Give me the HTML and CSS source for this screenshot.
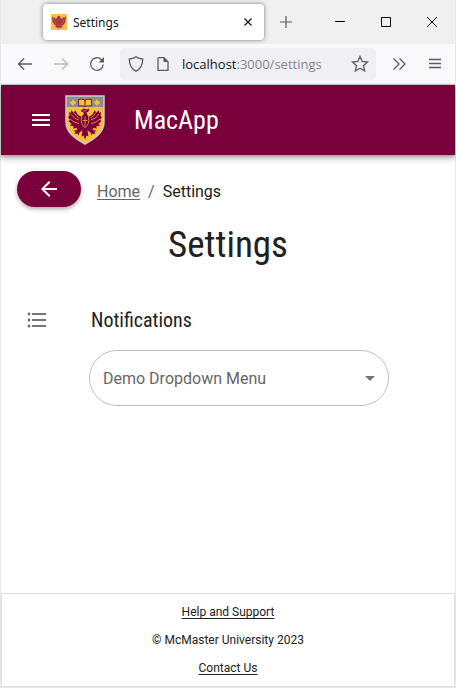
FILE: index.html
```html
<!DOCTYPE html>
<html lang="en">
<head>
<meta charset="utf-8">
<meta name="viewport" content="width=device-width, initial-scale=1">
<title>Settings</title>
<link rel="stylesheet" href="styles.css">
</head>
<body>
<div class="window">
  <header class="chrome">
    <div class="tabstrip">
      <div class="tab">
        <svg class="favicon" viewBox="0 0 16 16" aria-hidden="true">
          <path fill="#ffbd4a" d="M0 0h16v16H0z"/>
          <path fill="#a33c42" d="M1 2l.5 6 2 3 2 .5-2 2 2-.5.5 1.500 1.500-1L8 15l.5-1.500 1.500 1 .5-1.500 2 .5-2-2 2-.5 2-3 .5-6-2 2-1-1-1 2-1.500-1V3L8 1.500 6 3v1L4.500 5l-1-2-1 1z"/>
          <path stroke="#d77a43" stroke-width=".5" fill="none" d="M3 6l2 4M13 6l-2 4M7 11h2"/>
        </svg>
        <span class="tab-title">Settings</span>
        <button class="plain tab-close" aria-label="Close tab"><svg width="10" height="10" viewBox="0 0 10 10"><path d="M1.500 1.500l7 7m0-7l-7 7" stroke="#15141a" stroke-width="1.200"/></svg></button>
      </div>
      <button class="plain new-tab" aria-label="New tab"><svg width="14" height="14" viewBox="0 0 14 14"><path d="M7 1v12M1 7h12" stroke="#5b5b66" stroke-width="1.200"/></svg></button>
      <div class="window-controls">
        <button class="plain" aria-label="Minimize"><svg width="12" height="12" viewBox="0 0 12 12"><path d="M1 5.500h10" stroke="#000"/></svg></button>
        <button class="plain" aria-label="Maximize"><svg width="12" height="12" viewBox="0 0 12 12"><path d="M1.500 1.500h9v9h-9z" stroke="#000" fill="none"/></svg></button>
        <button class="plain" aria-label="Close"><svg width="12" height="12" viewBox="0 0 12 12"><path d="M1 1l10 10M11 1L1 11" stroke="#000"/></svg></button>
      </div>
    </div>
    <div class="toolbar">
      <button class="plain" aria-label="Back"><svg width="16" height="16" viewBox="0 0 16 16"><path d="M15 8H1.500M7 2.500L1.500 8 7 13.500" class="line"/></svg></button>
      <button class="plain faded" aria-label="Forward"><svg width="16" height="16" viewBox="0 0 16 16"><path d="M1 8h13.500M9 2.500L14.500 8 9 13.500" class="line"/></svg></button>
      <button class="plain" aria-label="Reload"><svg width="16" height="16" viewBox="0 0 16 16"><path d="M14.200 8.500a6.300 6.300 0 1 1-1.700-4.800L14 5.300" class="line"/><path d="M15 1v5.500H9.500z" fill="#5b5b66"/></svg></button>
      <div class="address">
        <svg width="16" height="16" viewBox="0 0 16 16" aria-hidden="true"><path d="M8 .8C6 2.300 4 2.900 1.300 3c0 5.500 1.200 9.500 6.700 12.200C13.500 12.500 14.700 8.500 14.700 3 12 2.900 10 2.300 8 .8z" class="line"/></svg>
        <svg width="12" height="16" viewBox="0 0 12 16" aria-hidden="true"><path d="M2 1.700h5L11 5.700v8.600H1V2.700a1 1 0 0 1 1-1z" class="line"/><path d="M6.500 1.500V6H11z" fill="#5b5b66"/></svg>
        <span class="url"><span class="host">localhost</span>:3000/settings</span>
        <button class="plain" aria-label="Bookmark this page"><svg width="18" height="18" viewBox="0 0 18 18"><path d="M9 1.500l2.200 5 5.300.6-4 3.600 1.200 5.300L9 13.300 4.300 16l1.200-5.300-4-3.600 5.300-.6z" class="line"/></svg></button>
      </div>
      <div class="tools">
        <button class="plain" aria-label="More tools"><svg width="14" height="14" viewBox="0 0 14 14"><path d="M1.500 1.500L7 7l-5.500 5.500M7.500 1.500L13 7l-5.500 5.500" class="line"/></svg></button>
        <button class="plain" aria-label="Application menu"><svg width="12" height="12" viewBox="0 0 12 12"><path d="M0 1.500h12M0 5.500h12M0 9.500h12" class="line"/></svg></button>
      </div>
    </div>
  </header>

  <div class="appbar">
    <button class="plain" aria-label="Menu"><svg width="24" height="24" viewBox="0 0 24 24"><path d="M3 18h18v-2H3v2zm0-5h18v-2H3v2zm0-7v2h18V6H3z" fill="#fff"/></svg></button>
    <svg class="crest" viewBox="0 0 40 50" role="img" aria-label="McMaster University crest">
      <path d="M1 1h38v26c0 10-8 16-19 22C9 43 1 37 1 27z" fill="#fdbf3b"/>
      <path d="M1 1h38v11H1z" fill="#8b8e91"/>
      <path d="M13.500 4.500q3.500-1 6.500.5 3-1.500 6.500-.5V11q-3.500-.8-6.500.5-3-1.300-6.500-.5z" fill="#fdbf3b" stroke="#7a003c" stroke-width=".9"/>
      <path d="M20 5v6" stroke="#7a003c"/>
      <path d="M8 4l1 2 2.500 1.500L9.500 9 8 11 6.500 9l-2-1.500L7 6zM32 4l1 2 2.500 1.500L33.500 9 32 11l-1.500-2-2-1.500L31 6z" fill="#fdbf3b"/>
      <g fill="#7a003c">
        <path d="M17 22l-4-2-3-5-1 3-3-3v3l-2-1 .5 4-1.500 1 2 3-1.500 1 3 3-1.500 1.500 4 1-1 2 4-.5-.5 2 6-3zM23 22l4-2 3-5 1 3 3-3v3l2-1-.5 4 1.500 1-2 3 1.500 1-3 3 1.500 1.500-4 1 1 2-4-.5.5 2-6-3z"/>
        <path d="M15.500 16l3-2.500 3.500 1 2.500-1-1 3-2 1 1.500 4 1.500 5-1 5 5 4 3-.5-2 2 1 2-3-.5-1 2-1-3-3-2 1 6-2-1-1.500 4-1.500-4-2 1 1-6-3 2-1 3-1-2-3 .5 1-2-2-2 3 .5 5-4-1-5 1.500-5 2-3-1-1.500z"/>
      </g>
      <path d="M6 19q3 5 8 6M5 24q4 4 9 4.500M9.500 18q2 4 5 5M34 19q-3 5-8 6M35 24q-4 4-9 4.500M30.500 18q-2 4-5 5M20 21.500v10M17.500 25.500h5M16.500 22q-1.500 7 3.500 10.500 5-3.500 3.500-10.500M18 15.800h3" fill="none" stroke="#fdbf3b" stroke-width=".7"/>
      <path d="M1 1h38v26c0 10-8 16-19 22C9 43 1 37 1 27z" fill="none" stroke="#c8cacb" stroke-width="1.500"/>
    </svg>
    <span class="app-name">MacApp</span>
  </div>

  <main>
    <div class="crumb-row">
      <button class="back" aria-label="Go back"><svg width="24" height="24" viewBox="0 0 24 24"><path d="M20 11H7.830l5.590-5.590L12 4l-8 8 8 8 1.410-1.410L7.830 13H20v-2z" fill="#fff"/></svg></button>
      <nav class="crumbs" aria-label="Breadcrumb"><a href="#">Home</a><span class="separator">/</span><span class="current" aria-current="page">Settings</span></nav>
    </div>
    <h1>Settings</h1>
    <section class="setting">
      <svg class="list-icon" width="24" height="24" viewBox="0 0 24 24" aria-hidden="true"><path d="M4 10.500c-.83 0-1.500.67-1.500 1.500s.67 1.500 1.500 1.500 1.500-.67 1.500-1.500-.67-1.500-1.500-1.500zm0-6c-.83 0-1.500.67-1.500 1.500S3.170 7.500 4 7.500 5.500 6.830 5.500 6 4.830 4.500 4 4.500zm0 12c-.83 0-1.500.68-1.500 1.500s.68 1.500 1.500 1.500 1.500-.68 1.500-1.500-.67-1.500-1.500-1.500zM7 19h14v-2H7v2zm0-6h14v-2H7v2zm0-8v2h14V5H7z" fill="#757575"/></svg>
      <h2><label for="demo">Notifications</label></h2>
      <div class="dropdown">
        <select id="demo"><option>Demo Dropdown Menu</option></select>
        <svg class="caret" width="24" height="24" viewBox="0 0 24 24" aria-hidden="true"><path d="M7 10l5 5 5-5z" fill="#757575"/></svg>
      </div>
    </section>
  </main>

  <footer>
    <a href="#">Help and Support</a>
    <span>© McMaster University 2023</span>
    <a href="#">Contact Us</a>
  </footer>
</div>
</body>
</html>
```

FILE: styles.css
```css
* { box-sizing: border-box; }

body {
  margin: 0;
  font-family: Roboto, "Liberation Sans", sans-serif;
  color: #212121;
  background: #fff;
}

.window {
  display: flex;
  flex-direction: column;
  min-height: 100vh;
  border: solid #e8e8e8;
  border-width: 0 1px 1px;
}

svg { display: block; flex: none; }

.plain {
  display: flex;
  align-items: center;
  justify-content: center;
  padding: 0;
  border: 0;
  background: none;
}

.line { fill: none; stroke: #5b5b66; stroke-width: 1.3; }
.faded { opacity: 0.4; }

/* Browser frame */
.chrome {
  font-family: "Open Sans", "Noto Sans", sans-serif;
  border-bottom: 1px solid #ccccd0;
}

.tabstrip {
  display: flex;
  align-items: center;
  height: 44px;
  padding: 0 17px 0 42px;
  background: #f0f0f0;
}

.tab {
  display: flex;
  align-items: center;
  flex: 0 1 221px;
  height: 36px;
  padding: 0 11px 0 8px;
  border-radius: 4px;
  background: #fff;
  box-shadow: 0 0 4px rgba(0, 0, 0, 0.5);
}

.favicon { width: 16px; height: 16px; }
.tab-title { margin-left: 6px; font-family: "Noto Sans", sans-serif; font-size: 12px; color: #15141a; }
.tab-close { margin-left: auto; }
.new-tab { margin-left: 15px; }
.window-controls { display: flex; gap: 34px; margin-left: auto; }

.toolbar {
  display: flex;
  align-items: center;
  gap: 20px;
  height: 40px;
  padding: 0 14px 0 16px;
  background: #f9f9fb;
}

.address {
  display: flex;
  align-items: center;
  flex: 1;
  gap: 13px;
  height: 32px;
  margin: 0 -4px 0 -5px;
  padding: 0 7px 0 8px;
  border-radius: 4px;
  background: #f0f0f4;
}

.tools { display: flex; align-items: center; gap: 23px; }

.url { flex: 1; font-size: 13px; color: #85858c; white-space: nowrap; }
.host { color: #15141a; }

/* Application bar */
.appbar {
  display: flex;
  align-items: center;
  height: 70px;
  padding: 0 28px;
  background: #7a003c;
  color: #fff;
  box-shadow: 0 2px 4px rgba(0, 0, 0, 0.3), 0 4px 8px rgba(0, 0, 0, 0.15);
}

.crest { width: 40px; height: 50px; margin-left: 12px; }
.app-name { margin-left: 29px; font: 400 26px "Roboto Condensed", Roboto, sans-serif; }

main { flex: 1; padding: 16px; }

.crumb-row { display: flex; align-items: center; gap: 16px; }

.back {
  display: flex;
  align-items: center;
  justify-content: center;
  width: 64px;
  height: 36px;
  padding: 0;
  border: 0;
  border-radius: 18px;
  background: #7a003c;
  box-shadow: 0 2px 4px rgba(0, 0, 0, 0.35);
}

.crumbs { display: flex; gap: 8px; padding-top: 6px; font-size: 16px; line-height: 24px; }
.crumbs a { color: #666; text-underline-offset: 2px; }
.separator { color: #666; }

h1 {
  margin: 14px 0 0;
  font: 400 37px/48px "Roboto Condensed", Roboto, sans-serif;
  text-align: center;
}

.setting {
  display: grid;
  grid-template-columns: 24px minmax(0, 300px);
  column-gap: 40px;
  row-gap: 14px;
  align-items: center;
  margin-top: 35px;
  padding-left: 8px;
}

h2 { margin: 0; padding-left: 2px; font: 400 20px/32px "Roboto Condensed", Roboto, sans-serif; }

.dropdown { position: relative; grid-column: 2; }

select {
  width: 100%;
  height: 56px;
  padding: 0 40px 0 13px;
  border: 1px solid #c0c0c0;
  border-radius: 28px;
  background: #fff;
  color: #666;
  font: 400 16px Roboto, sans-serif;
  appearance: none;
}

.caret { position: absolute; top: 16px; right: 7px; pointer-events: none; }

footer {
  display: flex;
  flex-direction: column;
  align-items: center;
  gap: 8px;
  padding: 8px;
  border: 1px solid #e0e0e0;
  font-size: 12px;
  line-height: 20px;
}

footer a { color: inherit; text-underline-offset: 2px; }
```
